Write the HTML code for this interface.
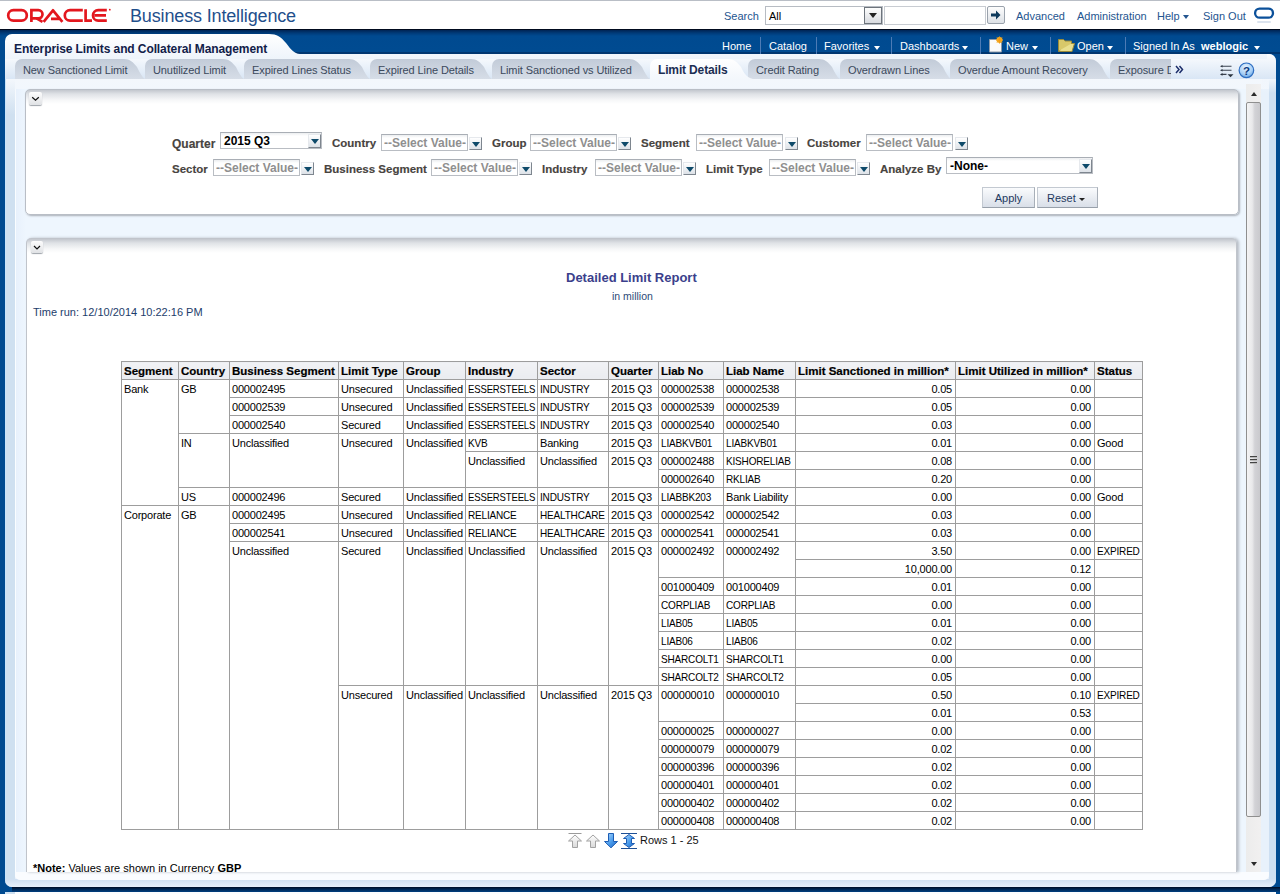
<!DOCTYPE html>
<html><head><meta charset="utf-8">
<style>
*{box-sizing:border-box}
html,body{margin:0;padding:0;width:1280px;height:894px;overflow:hidden;background:#fff;font-family:"Liberation Sans",sans-serif}
.a{position:absolute;white-space:nowrap}
.lnk{color:#24558f;font-size:11px;top:10px}
.nav{color:#fff;font-size:11px;top:40px}
.sep{position:absolute;background:#4d7bb5;width:1px;height:17px;top:37px}
.caret{position:absolute;width:0;height:0;border-left:3.5px solid transparent;border-right:3.5px solid transparent;border-top:4px solid #fff}
.tabt{position:absolute;top:64px;font-size:11px;color:#3b495c;letter-spacing:-0.1px}
.lbl{position:absolute;font-size:11.5px;font-weight:bold;color:#48443f;margin-top:1px;-webkit-text-stroke:0.15px #48443f}
.sel{position:absolute;height:17px;border:1px solid #b9bdc3;border-top-color:#a9aeb5;background:linear-gradient(#eceef0 0,#fff 3px);font-size:12px;font-weight:bold;color:#8f8f8f;line-height:17px;padding-left:2px;white-space:nowrap;overflow:hidden}
.dd{position:absolute;width:13px;height:13px;border:1px solid #e6e9ed;border-right-color:#7e868f;border-bottom-color:#7e868f;background:linear-gradient(#ffffff,#dde2e8)}
.dd:after{content:"";position:absolute;left:2px;top:4px;border-left:4px solid transparent;border-right:4px solid transparent;border-top:5px solid #0e4a6a}
table.rep{border-collapse:collapse;position:absolute;left:121px;top:361px;font-size:11px;color:#000;table-layout:fixed}
table.rep td,table.rep th{border:1px solid #9d9d9d;padding:1px 0 0 2px;height:18px;vertical-align:top;line-height:16px;white-space:nowrap;overflow:hidden;letter-spacing:-0.2px}
table.rep th{background:linear-gradient(#f1f2f5,#eaecf0);font-weight:bold;text-align:left;height:18px;font-size:11.5px;line-height:15px;padding:2px 0 0 2px;letter-spacing:0;-webkit-text-stroke:0.2px #000}
table.rep td.n{text-align:right;padding:1px 3px 0 0}
.sx{display:inline-block;transform:scaleX(0.88);transform-origin:0 0}
</style></head><body>
<!-- header -->
<div class="a" style="left:0;top:0;width:1280px;height:29px;background:#fff;border-top:1px solid #b9bec6"></div>
<svg class="a" style="left:0;top:0" width="120" height="28" viewBox="0 0 120 28">
 <g fill="none" stroke="#e3171e" stroke-width="2.7">
  <rect x="8.2" y="10.2" width="18.6" height="10.4" rx="5.2"/>
  <path d="M31.4 21.9V10.2H38.4a4.1 4.1 0 0 1 0 8.2H32.5"/><path d="M36.5 18.4L42.5 21.9" stroke-width="2.5"/>
  <path d="M43.6 21.9L53 10.3L62.4 21.9M51 18.9H59.6" stroke-linejoin="round"/>
  <path d="M82.8 10.2H70a5.2 5.2 0 0 0 0 10.4H82.8"/>
  <path d="M85.6 9.2V20.6H92"/>
  <path d="M106.8 10.2H98.2a5.2 5.2 0 0 0 0 10.4H106.8M94.6 15.4H106"/>
 </g>
 <circle cx="109.8" cy="9.7" r="0.9" fill="#e3171e"/>
</svg>
<div class="a" style="left:130px;top:6px;font-size:18px;color:#1f4f8c;letter-spacing:-0.15px">Business Intelligence</div>
<div class="a lnk" style="left:724px">Search</div>
<div class="a" style="left:765px;top:6px;width:118px;height:19px;border:1px solid #b7bcc3;background:#fff;font-size:11px;line-height:19px;padding-left:3px;color:#000">All</div>
<div class="a" style="left:864px;top:7px;width:18px;height:17px;border:1px solid #6d747c;background:linear-gradient(#fdfdfd,#d8dbe0)"></div>
<div class="a" style="left:869px;top:13px;border-left:4px solid transparent;border-right:4px solid transparent;border-top:5px solid #222"></div>
<div class="a" style="left:884px;top:6px;width:102px;height:19px;border:1px solid #c8ccd2;background:#fff"></div>
<div class="a" style="left:987px;top:6px;width:18px;height:18px;border:1px solid #9aa2ac;border-radius:2px;background:linear-gradient(#fdfdfd,#dde1e6)"></div>
<svg class="a" style="left:990px;top:9px" width="12" height="12" viewBox="0 0 12 12"><path d="M1 4.5H6V1.5L10.5 6L6 10.5V7.5H1Z" fill="#0e3a5c"/></svg>
<div class="a lnk" style="left:1016px">Advanced</div>
<div class="a lnk" style="left:1077px">Administration</div>
<div class="a lnk" style="left:1157px">Help</div>
<div class="a" style="left:1183px;top:15px;border-left:3.5px solid transparent;border-right:3.5px solid transparent;border-top:4px solid #24558f"></div>
<div class="a lnk" style="left:1203px">Sign Out</div>
<svg class="a" style="left:1252px;top:5px" width="26" height="20" viewBox="0 0 26 20"><rect x="3.1" y="3.6" width="17.9" height="9.1" rx="4.55" fill="none" stroke="#0b509a" stroke-width="2.3"/><rect x="5" y="16" width="14" height="2" rx="1" fill="#dbe3ee"/></svg>
<!-- frame -->
<div class="a" style="left:0;top:29px;width:1280px;height:865px;background:linear-gradient(#000a1e 0,#000a1e 1px,#002453 1px,#003a78 4px,#004a90 7px)"></div>

<div class="a" style="left:5px;top:29px;width:1275px;height:25px;background:linear-gradient(#000a1e 0,#000a1e 1px,#002453 1px,#003a78 4px,#004a90 7px,#004b91 23px,#003670 23px,#003670 25px)"></div>
<!-- inner light panel -->
<div class="a" style="left:5px;top:54px;width:1271px;height:833px;border-radius:0 7px 7px 7px;background:linear-gradient(90deg,#c8e4fb 0,#c8e4fb 1px,#cfe0f0 1px,#cfe0f0 10px,#e8f1fb 10px,#e8f1fb calc(100% - 7px),#cddff2 calc(100% - 7px))"></div>
<div class="a" style="left:5px;top:879px;width:1271px;height:8px;border-radius:0 0 7px 7px;background:linear-gradient(#cfdff1,#e9f1fb)"></div>
<div class="a" style="left:5px;top:54px;width:1271px;height:25px;border-radius:0 7px 0 0;background:linear-gradient(#fdfeff 0,#f3f7fc 6px,#d9e6f5 25px)"></div>
<div class="a" style="left:12px;top:887px;width:1268px;height:5px;background:linear-gradient(#000d24,#00254f 2px,#003f80)"></div>
<div class="a" style="left:5px;top:892px;width:1271px;height:2px;background:linear-gradient(90deg,#c8e4fb 0,#c8e4fb 1px,#cfe0f0 1px,#cfe0f0 10px,#fbfdff 10px)"></div>
<!-- title tab -->
<svg class="a" style="left:5px;top:33px" width="1271" height="26" viewBox="0 0 1271 26">
 <defs><linearGradient id="tg" x1="0" y1="0" x2="0" y2="1"><stop offset="0" stop-color="#ffffff"/><stop offset="1" stop-color="#eef4fb"/></linearGradient></defs>
 <path d="M0 26V8A7 7 0 0 1 7 1H264C272 1 276 4 281 10C286 16.5 289 20.5 295 21H1262V26Z" fill="url(#tg)"/>
</svg>
<div class="a" style="left:14px;top:41.5px;font-size:12px;font-weight:bold;color:#112048;letter-spacing:-0.1px">Enterprise Limits and Collateral Management</div>
<!-- nav -->
<div class="a nav" style="left:722px">Home</div><div class="sep" style="left:760px"></div>
<div class="a nav" style="left:769px">Catalog</div><div class="sep" style="left:816px"></div>
<div class="a nav" style="left:824px">Favorites</div><div class="caret" style="left:874px;top:46px"></div><div class="sep" style="left:891px"></div>
<div class="a nav" style="left:900px">Dashboards</div><div class="caret" style="left:962px;top:46px"></div><div class="sep" style="left:980px"></div>
<svg class="a" style="left:988px;top:36px" width="16" height="17" viewBox="0 0 16 17"><path d="M1.5 3.5H10L13.5 7V16H1.5Z" fill="#fafafa" stroke="#8c99a8" stroke-width="1"/><circle cx="11.5" cy="4" r="3" fill="#f6b42a"/><path d="M11.5 0.5V7.5M8 4H15M9 1.5L14 6.5M14 1.5L9 6.5" stroke="#f29a14" stroke-width="1"/></svg>
<div class="a nav" style="left:1006px">New</div><div class="caret" style="left:1032px;top:46px"></div><div class="sep" style="left:1050px"></div>
<svg class="a" style="left:1058px;top:38px" width="17" height="14" viewBox="0 0 17 14"><path d="M0.5 2.5V13.5H14L16.5 5.5H4L1.5 13" fill="#e9df8f" stroke="#9a8a3a" stroke-width="1"/><path d="M0.5 13V1.5H5.5L7 3H13.5V5.5" fill="#d8c86a" stroke="#9a8a3a" stroke-width="1"/></svg>
<div class="a nav" style="left:1077px">Open</div><div class="caret" style="left:1107px;top:46px"></div><div class="sep" style="left:1125px"></div>
<div class="a nav" style="left:1133px">Signed In As</div>
<div class="a nav" style="left:1201px;font-weight:bold">weblogic</div><div class="caret" style="left:1254px;top:46px"></div>
<!-- tabs -->
<svg class="a" style="left:0;top:58px" width="1280" height="23" viewBox="0 0 1280 23">
 <defs><linearGradient id="tb" x1="0" y1="0" x2="0" y2="1"><stop offset="0" stop-color="#c2cbd8"/><stop offset="1" stop-color="#d6dde7"/></linearGradient>
 <linearGradient id="ta" x1="0" y1="0" x2="0" y2="1"><stop offset="0" stop-color="#ffffff"/><stop offset="1" stop-color="#f3f7fc"/></linearGradient></defs>
 <g fill="url(#tb)">
  <path d="M15 21V8A7 7 0 0 1 22 1H124C130 1 133 4 137 9C140 15 142 19 145 21Z"/>
  <path d="M145 21V8A7 7 0 0 1 152 1H223C229 1 232 4 236 9C239 15 241 19 244 21Z"/>
  <path d="M244 21V8A7 7 0 0 1 251 1H349C355 1 358 4 362 9C365 15 367 19 370 21Z"/>
  <path d="M370 21V8A7 7 0 0 1 377 1H471C477 1 480 4 484 9C487 15 489 19 492 21Z"/>
  <path d="M492 21V8A7 7 0 0 1 499 1H629C635 1 638 4 642 9C645 15 647 19 650 21Z"/>
  <path d="M748 21V8A7 7 0 0 1 755 1H819C825 1 828 4 832 9C835 15 837 19 840 21Z"/>
  <path d="M840 21V8A7 7 0 0 1 847 1H930C936 1 939 4 943 9C946 15 948 19 951 21Z"/>
  <path d="M950 21V8A7 7 0 0 1 957 1H1089C1095 1 1098 4 1102 9C1105 15 1107 19 1110 21Z"/>
  <path d="M1110 21V8A7 7 0 0 1 1117 1H1171V21Z"/>
 </g>
 <path d="M650 21V8A7 7 0 0 1 657 1H728C734 1 737 4 741 9C744 15 746 19 753 21Z" fill="url(#ta)"/>
</svg>

<div class="tabt" style="left:23px">New Sanctioned Limit</div>
<div class="tabt" style="left:153px">Unutilized Limit</div>
<div class="tabt" style="left:252px">Expired Lines Status</div>
<div class="tabt" style="left:378px">Expired Line Details</div>
<div class="tabt" style="left:500px">Limit Sanctioned vs Utilized</div>
<div class="tabt" style="left:658px;font-weight:bold;color:#1b2d52;font-size:12px;top:63px;letter-spacing:-0.15px">Limit Details</div>
<div class="tabt" style="left:756px">Credit Rating</div>
<div class="tabt" style="left:848px">Overdrawn Lines</div>
<div class="tabt" style="left:958px">Overdue Amount Recovery</div>
<div class="a" style="left:1110px;top:59px;width:61px;height:20px;overflow:hidden"><div class="tabt" style="left:8px;top:5px">Exposure Details</div></div>
<svg class="a" style="left:1175px;top:65px" width="9" height="9" viewBox="0 0 9 9"><path d="M1 1L4 4.5L1 8M4.5 1L7.5 4.5L4.5 8" fill="none" stroke="#1b2d6a" stroke-width="1.5"/></svg>
<svg class="a" style="left:1217px;top:62px" width="18" height="17" viewBox="0 0 18 17"><g stroke="#3b4350" stroke-width="1.1"><path d="M5 4.2H14.5M5 8.3H14.5M5 12.4H9.5"/></g><g fill="#2b3440"><path d="M3 4.2L5.5 2.9V5.5Z"/><path d="M3 8.3L5.5 7V9.6Z"/><path d="M3 12.4L5.5 11.1V13.7Z"/><path d="M10.5 12.3H16.5L13.5 15.3Z"/></g></svg>
<svg class="a" style="left:1237px;top:61px" width="19" height="19" viewBox="0 0 19 19"><defs><radialGradient id="hg" cx="0.45" cy="0.3" r="0.75"><stop offset="0" stop-color="#e6f3fe"/><stop offset="0.6" stop-color="#a9d0f6"/><stop offset="1" stop-color="#5f9fe0"/></radialGradient></defs><circle cx="9.4" cy="9.3" r="7.3" fill="url(#hg)" stroke="#2c6cc0" stroke-width="1.2"/><text x="9.5" y="13.6" text-anchor="middle" font-family="Liberation Sans" font-weight="bold" font-size="11.5" fill="#0c3a80">?</text></svg>
<!-- content container -->
<div class="a" style="left:15px;top:79px;width:1254px;height:801px;border-radius:0 6px 5px 5px;background:linear-gradient(90deg,#fafdff 0,#fafdff 1px,#e8f1fc 1px,#eef6fe 11px,#eef6fe calc(100% - 8px),#e8f1fb calc(100% - 8px))"></div>
<div class="a" style="left:15px;top:79px;width:1254px;height:10px;background:linear-gradient(#f3f7fc,#f2f7fd)"></div>
<div class="a" style="left:15px;top:872px;width:1254px;height:8px;border-radius:0 0 5px 5px;background:#fafcff"></div>
<div class="a" style="left:6px;top:79px;width:10px;height:36px;background:linear-gradient(#f3f7fc,rgba(243,247,252,0))"></div>
<div class="a" style="left:1262px;top:79px;width:14px;height:14px;background:linear-gradient(#f1f6fc,rgba(241,246,252,0))"></div>
<!-- scrollbar -->
<div class="a" style="left:1246px;top:84px;width:15px;height:788px;background:linear-gradient(90deg,#ececec,#f1f0f0)"></div>
<div class="a" style="left:1251px;top:92px;border-left:3.5px solid transparent;border-right:3.5px solid transparent;border-bottom:4px solid #2a2a2a"></div>
<div class="a" style="left:1251px;top:862px;border-left:3.5px solid transparent;border-right:3.5px solid transparent;border-top:4px solid #2a2a2a"></div>
<div class="a" style="left:1246px;top:102px;width:15px;height:715px;border:1px solid #8f8f8f;border-radius:2px;background:linear-gradient(90deg,#f4f4f5 0,#e9e9eb 40%,#d2d2d6 60%,#c9c9cd 100%)"></div>
<div class="a" style="left:1250px;top:456px;width:7px;height:1px;background:#444;box-shadow:0 1px 0 #bbb,0 3px 0 #444,0 4px 0 #bbb,0 6px 0 #444,0 7px 0 #bbb"></div>
<!-- prompts panel -->
<div class="a" style="left:25px;top:89px;width:1214px;height:126px;border:1px solid #b9bec6;border-radius:5px;background:linear-gradient(#c3c7ce 0,#dfe2e6 4px,#f6f7f8 10px,#fff 14px);box-shadow:1px 1px 2px #aab0b8"></div>
<div class="a" style="left:29px;top:92px;width:13px;height:13px;border-radius:2px;background:linear-gradient(#fdfdfd,#e0e2e5);box-shadow:0 1px 1px #9ea3aa"></div>
<svg class="a" style="left:29px;top:92px" width="13" height="13" viewBox="0 0 13 13"><path d="M3.2 5.2L6.5 8.3L9.8 5.2" fill="none" stroke="#111" stroke-width="1.2"/></svg>

<div class="lbl" style="left:172px;top:136px;font-size:12px">Quarter</div>
<div class="sel" style="left:220px;top:132px;width:102px;height:17px;color:#000;line-height:16px;padding-left:3px">2015 Q3</div><div class="dd" style="left:308px;top:134px;width:13px;height:14px"></div>
<div class="lbl" style="left:332px;top:136px">Country</div><div class="sel" style="left:381px;top:134px;width:87px">--Select Value-</div><div class="dd" style="left:469px;top:137px;width:13px;height:13px"></div>
<div class="lbl" style="left:492px;top:136px">Group</div><div class="sel" style="left:530px;top:134px;width:87px">--Select Value-</div><div class="dd" style="left:618px;top:137px;width:13px;height:13px"></div>
<div class="lbl" style="left:641px;top:136px">Segment</div><div class="sel" style="left:696px;top:134px;width:87px">--Select Value-</div><div class="dd" style="left:785px;top:137px;width:13px;height:13px"></div>
<div class="lbl" style="left:807px;top:136px">Customer</div><div class="sel" style="left:866px;top:134px;width:87px">--Select Value-</div><div class="dd" style="left:955px;top:137px;width:13px;height:13px"></div>
<div class="lbl" style="left:172px;top:162px">Sector</div><div class="sel" style="left:213px;top:159px;width:87px">--Select Value-</div><div class="dd" style="left:301px;top:162px;width:13px;height:13px"></div>
<div class="lbl" style="left:324px;top:162px">Business Segment</div><div class="sel" style="left:431px;top:159px;width:87px">--Select Value-</div><div class="dd" style="left:519px;top:162px;width:13px;height:13px"></div>
<div class="lbl" style="left:542px;top:162px">Industry</div><div class="sel" style="left:595px;top:159px;width:87px">--Select Value-</div><div class="dd" style="left:683px;top:162px;width:13px;height:13px"></div>
<div class="lbl" style="left:706px;top:162px">Limit Type</div><div class="sel" style="left:769px;top:159px;width:87px">--Select Value-</div><div class="dd" style="left:857px;top:162px;width:13px;height:13px"></div>
<div class="lbl" style="left:880px;top:162px">Analyze By</div>
<div class="sel" style="left:946px;top:157px;width:147px;color:#000;line-height:17px;padding-left:3px">-None-</div><div class="dd" style="left:1079px;top:159px;width:13px;height:14px"></div>

<div class="a" style="left:982px;top:187px;width:53px;height:21px;border:1px solid #c3c9d1;border-bottom-color:#98a0aa;border-right-color:#a8afb8;background:linear-gradient(#fafbfd,#d9dfe8);font-size:11px;color:#1f3a5f;text-align:center;line-height:21px">Apply</div>
<div class="a" style="left:1037px;top:187px;width:61px;height:21px;border:1px solid #c3c9d1;border-bottom-color:#98a0aa;border-right-color:#a8afb8;background:linear-gradient(#fafbfd,#d9dfe8);font-size:11px;color:#1f3a5f;line-height:21px;padding-left:9px">Reset</div>
<div class="a" style="left:1079px;top:198px;border-left:3px solid transparent;border-right:3px solid transparent;border-top:3.5px solid #222"></div>

<!-- report panel -->
<div class="a" style="left:26px;top:238px;width:1211px;height:634px;border:1px solid #c0c4cb;border-bottom:none;border-radius:5px 5px 0 0;box-shadow:2px 0 3px #b6bcc4;background:linear-gradient(#c3c7ce 0,#dfe2e6 4px,#f6f7f8 10px,#fff 14px)"></div>
<div class="a" style="left:31px;top:241px;width:12px;height:12px;border-radius:2px;background:linear-gradient(#fdfdfd,#e0e2e5);box-shadow:0 1px 1px #9ea3aa"></div>
<svg class="a" style="left:31px;top:241px" width="12" height="12" viewBox="0 0 12 12"><path d="M3 5L6 8L9 5" fill="none" stroke="#111" stroke-width="1.2"/></svg>
<div class="a" style="left:566px;top:270px;font-size:13px;font-weight:bold;color:#3b3f8c">Detailed Limit Report</div>
<div class="a" style="left:612px;top:290px;font-size:10.5px;color:#2d4a78">in million</div>
<div class="a" style="left:33px;top:306px;font-size:11px;color:#1d3d6b">Time run: 12/10/2014 10:22:16 PM</div>
<table class="rep" style="width:1022px">
<colgroup><col style="width:57px"><col style="width:51px"><col style="width:109px"><col style="width:65px"><col style="width:62px"><col style="width:72px"><col style="width:71px"><col style="width:50px"><col style="width:65px"><col style="width:72px"><col style="width:160px"><col style="width:139px"><col style="width:48px"></colgroup>
<tr><th>Segment</th><th>Country</th><th>Business Segment</th><th>Limit Type</th><th>Group</th><th>Industry</th><th>Sector</th><th>Quarter</th><th>Liab No</th><th>Liab Name</th><th>Limit Sanctioned in million*</th><th>Limit Utilized in million*</th><th>Status</th></tr>
<tr><td rowspan="7">Bank</td><td rowspan="3">GB</td><td>000002495</td><td>Unsecured</td><td>Unclassified</td><td><span class="sx" style="transform:scaleX(0.87)">ESSERSTEELS</span></td><td><span class="sx" style="transform:scaleX(0.91)">INDUSTRY</span></td><td>2015 Q3</td><td>000002538</td><td>000002538</td><td class="n">0.05</td><td class="n">0.00</td><td></td></tr>
<tr><td>000002539</td><td>Unsecured</td><td>Unclassified</td><td><span class="sx" style="transform:scaleX(0.87)">ESSERSTEELS</span></td><td><span class="sx" style="transform:scaleX(0.91)">INDUSTRY</span></td><td>2015 Q3</td><td>000002539</td><td>000002539</td><td class="n">0.05</td><td class="n">0.00</td><td></td></tr>
<tr><td>000002540</td><td>Secured</td><td>Unclassified</td><td><span class="sx" style="transform:scaleX(0.87)">ESSERSTEELS</span></td><td><span class="sx" style="transform:scaleX(0.91)">INDUSTRY</span></td><td>2015 Q3</td><td>000002540</td><td>000002540</td><td class="n">0.03</td><td class="n">0.00</td><td></td></tr>
<tr><td rowspan="3">IN</td><td rowspan="3">Unclassified</td><td rowspan="3">Unsecured</td><td rowspan="3">Unclassified</td><td><span class="sx" style="transform:scaleX(0.91)">KVB</span></td><td>Banking</td><td>2015 Q3</td><td><span class="sx" style="transform:scaleX(0.91)">LIABKVB01</span></td><td><span class="sx" style="transform:scaleX(0.91)">LIABKVB01</span></td><td class="n">0.01</td><td class="n">0.00</td><td>Good</td></tr>
<tr><td rowspan="2">Unclassified</td><td rowspan="2">Unclassified</td><td rowspan="2">2015 Q3</td><td>000002488</td><td><span class="sx" style="transform:scaleX(0.91)">KISHORELIAB</span></td><td class="n">0.08</td><td class="n">0.00</td><td></td></tr>
<tr><td>000002640</td><td><span class="sx" style="transform:scaleX(0.91)">RKLIAB</span></td><td class="n">0.20</td><td class="n">0.00</td><td></td></tr>
<tr><td>US</td><td>000002496</td><td>Secured</td><td>Unclassified</td><td><span class="sx" style="transform:scaleX(0.87)">ESSERSTEELS</span></td><td><span class="sx" style="transform:scaleX(0.91)">INDUSTRY</span></td><td>2015 Q3</td><td><span class="sx" style="transform:scaleX(0.91)">LIABBK203</span></td><td>Bank Liability</td><td class="n">0.00</td><td class="n">0.00</td><td>Good</td></tr>
<tr><td rowspan="18">Corporate</td><td rowspan="18">GB</td><td>000002495</td><td>Unsecured</td><td>Unclassified</td><td><span class="sx" style="transform:scaleX(0.91)">RELIANCE</span></td><td><span class="sx" style="transform:scaleX(0.91)">HEALTHCARE</span></td><td>2015 Q3</td><td>000002542</td><td>000002542</td><td class="n">0.03</td><td class="n">0.00</td><td></td></tr>
<tr><td>000002541</td><td>Unsecured</td><td>Unclassified</td><td><span class="sx" style="transform:scaleX(0.91)">RELIANCE</span></td><td><span class="sx" style="transform:scaleX(0.91)">HEALTHCARE</span></td><td>2015 Q3</td><td>000002541</td><td>000002541</td><td class="n">0.03</td><td class="n">0.00</td><td></td></tr>
<tr><td rowspan="16">Unclassified</td><td rowspan="8">Secured</td><td rowspan="8">Unclassified</td><td rowspan="8">Unclassified</td><td rowspan="8">Unclassified</td><td rowspan="8">2015 Q3</td><td rowspan="2">000002492</td><td rowspan="2">000002492</td><td class="n">3.50</td><td class="n">0.00</td><td><span class="sx" style="transform:scaleX(0.91)">EXPIRED</span></td></tr>
<tr><td class="n">10,000.00</td><td class="n">0.12</td><td></td></tr>
<tr><td>001000409</td><td>001000409</td><td class="n">0.01</td><td class="n">0.00</td><td></td></tr>
<tr><td><span class="sx" style="transform:scaleX(0.91)">CORPLIAB</span></td><td><span class="sx" style="transform:scaleX(0.91)">CORPLIAB</span></td><td class="n">0.00</td><td class="n">0.00</td><td></td></tr>
<tr><td><span class="sx" style="transform:scaleX(0.91)">LIAB05</span></td><td><span class="sx" style="transform:scaleX(0.91)">LIAB05</span></td><td class="n">0.01</td><td class="n">0.00</td><td></td></tr>
<tr><td><span class="sx" style="transform:scaleX(0.91)">LIAB06</span></td><td><span class="sx" style="transform:scaleX(0.91)">LIAB06</span></td><td class="n">0.02</td><td class="n">0.00</td><td></td></tr>
<tr><td><span class="sx" style="transform:scaleX(0.91)">SHARCOLT1</span></td><td><span class="sx" style="transform:scaleX(0.91)">SHARCOLT1</span></td><td class="n">0.00</td><td class="n">0.00</td><td></td></tr>
<tr><td><span class="sx" style="transform:scaleX(0.91)">SHARCOLT2</span></td><td><span class="sx" style="transform:scaleX(0.91)">SHARCOLT2</span></td><td class="n">0.05</td><td class="n">0.00</td><td></td></tr>
<tr><td rowspan="8">Unsecured</td><td rowspan="8">Unclassified</td><td rowspan="8">Unclassified</td><td rowspan="8">Unclassified</td><td rowspan="8">2015 Q3</td><td rowspan="2">000000010</td><td rowspan="2">000000010</td><td class="n">0.50</td><td class="n">0.10</td><td><span class="sx" style="transform:scaleX(0.91)">EXPIRED</span></td></tr>
<tr><td class="n">0.01</td><td class="n">0.53</td><td></td></tr>
<tr><td>000000025</td><td>000000027</td><td class="n">0.00</td><td class="n">0.00</td><td></td></tr>
<tr><td>000000079</td><td>000000079</td><td class="n">0.02</td><td class="n">0.00</td><td></td></tr>
<tr><td>000000396</td><td>000000396</td><td class="n">0.02</td><td class="n">0.00</td><td></td></tr>
<tr><td>000000401</td><td>000000401</td><td class="n">0.02</td><td class="n">0.00</td><td></td></tr>
<tr><td>000000402</td><td>000000402</td><td class="n">0.02</td><td class="n">0.00</td><td></td></tr>
<tr><td>000000408</td><td>000000408</td><td class="n">0.02</td><td class="n">0.00</td><td></td></tr>
</table>
<!-- pager -->
<svg class="a" style="left:567px;top:832px" width="16" height="17" viewBox="0 0 16 17"><defs><linearGradient id="gr" x1="0" y1="0" x2="0" y2="1"><stop offset="0" stop-color="#fdfdfd"/><stop offset="1" stop-color="#d9d9d9"/></linearGradient>
<linearGradient id="bl" x1="0" y1="0" x2="1" y2="1"><stop offset="0" stop-color="#b5dcfd"/><stop offset="0.55" stop-color="#4a9cec"/><stop offset="1" stop-color="#1c63c2"/></linearGradient></defs>
<path d="M1.5 1.5H14.5" stroke="#9a9a9a" stroke-width="1"/><path d="M1.5 9L8 3L14.5 9H10.5V15.5H5.5V9Z" fill="url(#gr)" stroke="#a2a2a2" stroke-width="1"/></svg>
<svg class="a" style="left:585px;top:832px" width="16" height="17" viewBox="0 0 16 17"><path d="M1.5 9L8 3L14.5 9H10.5V15.5H5.5V9Z" fill="url(#gr)" stroke="#a2a2a2" stroke-width="1"/></svg>
<svg class="a" style="left:603px;top:832px" width="16" height="17" viewBox="0 0 16 17"><path d="M1.5 9.5L8 15.8L14.5 9.5H10.5V1.5H5.5V9.5Z" fill="url(#bl)" stroke="#1d5db4" stroke-width="1"/></svg>
<svg class="a" style="left:620px;top:832px" width="18" height="18" viewBox="0 0 18 18"><path d="M1 1.5H17M1 16.5H17" stroke="#1d4f95" stroke-width="1"/><path d="M3.5 6.5L9 2.5L14.5 6.5H11.5V11.5H14.5L9 15.5L3.5 11.5H6.5V6.5Z" fill="url(#bl)" stroke="#1d5db4" stroke-width="1"/></svg>
<div class="a" style="left:640px;top:834px;font-size:11px;color:#111">Rows 1 - 25</div>
<div class="a" style="left:33px;top:862px;font-size:11px;color:#000"><b>*Note:</b> Values are shown in Currency <b>GBP</b></div>
</body></html>
